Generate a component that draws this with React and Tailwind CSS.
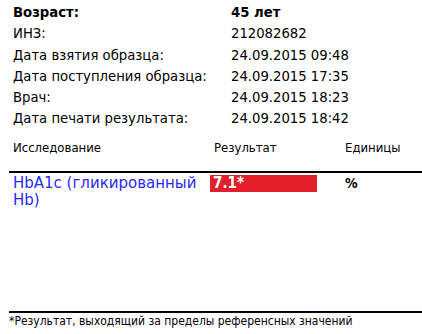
import React from 'react';

const info = [
  ['ИНЗ:', '212082682'],
  ['Дата взятия образца:', '24.09.2015 09:48'],
  ['Дата поступления образца:', '24.09.2015 17:35'],
  ['Врач:', '24.09.2015 18:23'],
  ['Дата печати результата:', '24.09.2015 18:42'],
];

const App = () => (
  <div
    className="w-[422px] h-[334px] bg-white text-black flex flex-col overflow-hidden"
    style={{ fontFamily: '"DejaVu Sans Condensed", "DejaVu Sans", sans-serif' }}
  >
    <div className="pl-[13px] pt-[1px] flex flex-col text-[14.7px] leading-[21.3px]">
      <div className="flex font-bold">
        <div className="w-[218px]">Возраст:</div>
        <div>45 лет</div>
      </div>
      {info.map(([label, value]) => (
        <div key={label} className="flex">
          <div className="w-[218px]">{label}</div>
          <div>{value}</div>
        </div>
      ))}
    </div>

    <div className="pl-[9px] mt-[11px]">
      <div className="flex text-[13px] leading-[16px] pb-[15px] border-b-2 border-black pl-[4px]">
        <div className="w-[201px]">Исследование</div>
        <div className="w-[131px]">Результат</div>
        <div>Единицы</div>
      </div>
      <div className="flex pt-[2px] pl-[4px]">
        <div
          className="w-[197px] text-[15px] leading-[17px] text-[#2a2af5]"
          style={{ fontFamily: '"DejaVu Sans", sans-serif' }}
        >
          HbA1c (гликированный Hb)
        </div>
        <div className="w-[135px]">
          <div className="w-[107px] h-[17px] bg-[#e31f2a] text-white font-bold text-[15px] leading-[17px] pl-[3px]">
            7.1*
          </div>
        </div>
        <div className="text-[14px] font-bold leading-[17px]">%</div>
      </div>
    </div>

    <div className="mt-auto pl-[9px] mb-[5px]">
      <div className="border-t-2 border-black text-[12px] leading-[15px] pt-[1px]">
        *Результат, выходящий за пределы референсных значений
      </div>
    </div>
  </div>
);

export default App;
